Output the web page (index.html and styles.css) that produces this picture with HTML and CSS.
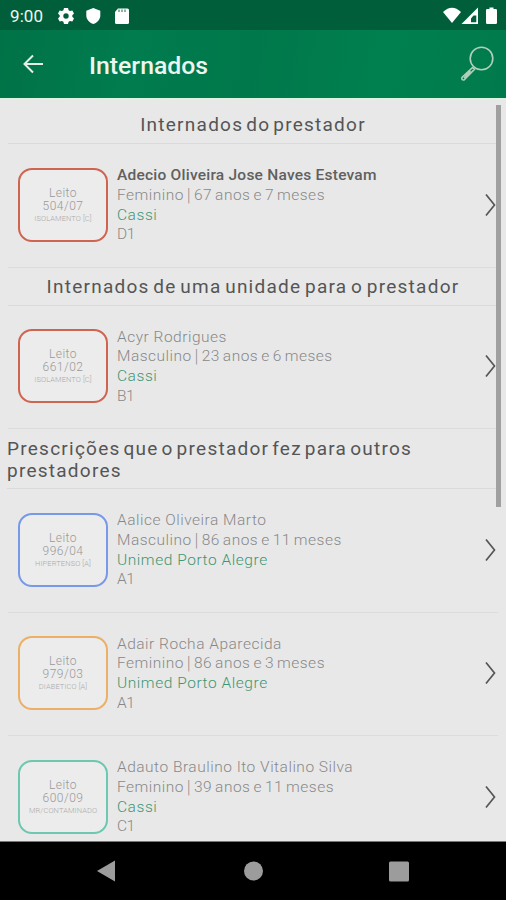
FILE: index.html
```html
<!DOCTYPE html>
<html lang="pt-BR">
<head>
<meta charset="utf-8">
<title>Internados</title>
<link rel="stylesheet" href="styles.css">
</head>
<body>
<div class="screen">
  <div class="status">
    <span class="time">9:00</span>
    <svg class="status-left" viewBox="0 0 74 20" width="74" height="20">
      <path fill-rule="evenodd" d="M7 2h4l.6 2.3 1.4.8 2.3-.7 1.7 3.2-1.7 1.6v1.6l1.7 1.6-1.7 3.2-2.3-.7-1.4.8L11 18H7l-.6-2.3-1.4-.8-2.3.7L1 12.400l1.700-1.600V9.200L1 7.600l1.700-3.200 2.300.7 1.400-.8zM9 7.300a2.700 2.700 0 1 0 0 5.400a2.700 2.700 0 0 0 0-5.400z"/>
      <path d="M36.300 2l7 2.700V9.500c0 4-3 7.200-7 8.500c-4-1.300-7-4.500-7-8.500V4.700z"/>
      <path d="M61 2.500h9.500q1.500 0 1.500 1.500v12.500q0 1.500-1.500 1.500h-11q-1.500 0-1.500-1.500V6z"/>
      <path class="sd-pins" d="M62 3.500v2.500M65 3.500v2.500M68 3.500v2.500"/>
    </svg>
    <svg class="status-right" viewBox="0 0 56 20" width="56" height="20">
      <path d="M1 6Q10-2.500 19 6L10 17z"/>
      <path fill-rule="evenodd" d="M36 1.500V18H19.500zM34.300 9.500h-2.800L29 12.500v3.700h5.300z"/>
      <path d="M47.500 1.500h4V3h2.200q1.300 0 1.300 1.300v12.400q0 1.300-1.300 1.300h-8.400q-1.300 0-1.300-1.300V4.300Q44 3 45.300 3h2.200z"/>
    </svg>
  </div>
  <header class="appbar">
    <svg class="back" viewBox="0 0 22 20" width="22" height="20"><path d="M20 10H2M10 1.500L1.500 10l8.500 8.500"/></svg>
    <h1>Internados</h1>
    <svg class="search" viewBox="0 0 36 36" width="36" height="36"><circle cx="22.500" cy="12.500" r="11.300"/><path d="M13.500 21.500L3 31.500q-.8 2.800 2 2.500L15.500 23.200zM11.500 25L5 32"/></svg>
  </header>
  <main class="list">
    <div class="thumb"></div>
    <h2 class="first">Internados do prestador</h2>
    <section class="row">
      <div class="bed red"><span>Leito</span><span>504/07</span><small>ISOLAMENTO [C]</small></div>
      <div class="info"><p class="strong">Adecio Oliveira Jose Naves Estevam</p><p class="age">Feminino <i>|</i> 67 anos e 7 meses</p><p class="plan">Cassi</p><p class="unit">D1</p></div>
      <svg class="chev" viewBox="0 0 11 24" width="11" height="24"><path d="M1 1.500L9.500 12 1 22.500"/></svg>
    </section>
    <h2 class="second">Internados de uma unidade para o prestador</h2>
    <section class="row">
      <div class="bed red"><span>Leito</span><span>661/02</span><small>ISOLAMENTO [C]</small></div>
      <div class="info"><p>Acyr Rodrigues</p><p class="age">Masculino <i>|</i> 23 anos e 6 meses</p><p class="plan">Cassi</p><p class="unit">B1</p></div>
      <svg class="chev" viewBox="0 0 11 24" width="11" height="24"><path d="M1 1.500L9.500 12 1 22.500"/></svg>
    </section>
    <h2 class="long">Prescrições que o prestador fez para outros<br>prestadores</h2>
    <section class="row">
      <div class="bed blue"><span>Leito</span><span>996/04</span><small>HIPERTENSO [A]</small></div>
      <div class="info"><p>Aalice Oliveira Marto</p><p class="age">Masculino <i>|</i> 86 anos e 11 meses</p><p class="plan">Unimed Porto Alegre</p><p class="unit">A1</p></div>
      <svg class="chev" viewBox="0 0 11 24" width="11" height="24"><path d="M1 1.500L9.500 12 1 22.500"/></svg>
    </section>
    <section class="row">
      <div class="bed orange"><span>Leito</span><span>979/03</span><small>DIABETICO [A]</small></div>
      <div class="info"><p>Adair Rocha Aparecida</p><p class="age">Feminino <i>|</i> 86 anos e 3 meses</p><p class="plan">Unimed Porto Alegre</p><p class="unit">A1</p></div>
      <svg class="chev" viewBox="0 0 11 24" width="11" height="24"><path d="M1 1.500L9.500 12 1 22.500"/></svg>
    </section>
    <section class="row">
      <div class="bed teal"><span>Leito</span><span>600/09</span><small>MR/CONTAMINADO</small></div>
      <div class="info"><p>Adauto Braulino Ito Vitalino Silva</p><p class="age">Feminino <i>|</i> 39 anos e 11 meses</p><p class="plan">Cassi</p><p class="unit">C1</p></div>
      <svg class="chev" viewBox="0 0 11 24" width="11" height="24"><path d="M1 1.500L9.500 12 1 22.500"/></svg>
    </section>
  </main>
  <nav class="navbar">
    <svg viewBox="0 0 506 58" width="506" height="58"><path d="M97 29L115 18.500v21z"/><circle cx="253.500" cy="29" r="9.500"/><rect x="389" y="19.500" width="20" height="20" rx="1.500"/></svg>
  </nav>
</div>
</body>
</html>
```
FILE: styles.css
```css
* { box-sizing: border-box; }
body { margin: 0; font-family: Roboto, "Liberation Sans", sans-serif; }
h1, h2, p { margin: 0; }
.screen { width: 506px; height: 900px; display: flex; flex-direction: column; overflow: hidden; background: #e8e8e8; }
.status { height: 30px; flex: none; display: flex; align-items: center; background: #005f3a; color: #f1f6f3; padding: 1px 8px 0 10px; }
.status svg { fill: #fff; }
.time { font-size: 17px; width: 47px; letter-spacing: .1px; }
.status-right { margin-left: auto; }
.sd-pins { stroke: #4b8a6d; stroke-width: 1.3; }
.appbar { height: 70px; flex: none; display: flex; align-items: center; padding: 0 11px 0 23px; color: #eef5ef; border-bottom: 2px solid #dcf3df; background: linear-gradient(100deg, #007247 0%, #007c4e 25%, #00784b 50%, #00804f 75%, #007a4c 100%); }
.appbar svg { fill: none; stroke: #e6efe7; }
.back { stroke-width: 2; }
.appbar h1 { font-size: 24.800px; font-weight: 500; margin: 3px 0 0 44px; }
.search { margin-left: auto; stroke-width: 1.600; }
.appbar .search { stroke: #b0d0bc; }
.list { position: relative; height: 742px; flex: none; overflow: hidden; border-bottom: 1px solid #777; padding: 0 8px; }
.thumb { position: absolute; left: 496px; top: 5px; width: 5px; height: 402px; background: #a0a0a0; }
h2 { height: 38px; font-size: 19px; line-height: 21.500px; font-weight: 400; color: #555; letter-spacing: 1.250px; word-spacing: -3px; text-align: center; padding-top: 8px; border-bottom: 1px solid #dadada; white-space: nowrap; }
h2.first { height: 44px; padding-top: 14px; }
h2.second { word-spacing: -2.300px; }
h2.long { height: 60px; text-align: left; padding-top: 9px; margin-left: -1px; }
.row { height: 123.500px; display: flex; border-bottom: 1px solid #dcdcdc; padding: 23.500px 0 0 10px; }
.bed { width: 90px; height: 74px; border: 1.500px solid; border-width: 2px; border-radius: 14px; background: #ececec; display: flex; flex-direction: column; align-items: center; padding-top: 17px; font-weight: 300; }
.bed span { font-size: 12px; line-height: 13px; color: #999; letter-spacing: .5px; }
.bed small { font-size: 7.500px; line-height: 12px; color: #aaa; white-space: nowrap; letter-spacing: .1px; }
.red { border-color: #cf6450; }
.blue { border-color: #7898e8; }
.orange { border-color: #ebb066; }
.teal { border-color: #6cc8b0; }
.info { margin-left: 9px; margin-top: -1.500px; flex: 1; }
.info p { font-size: 15.500px; line-height: 19.750px; font-weight: 300; color: #888; letter-spacing: .5px; white-space: nowrap; }
.info .age { word-spacing: -1.300px; }
.info .age i { display: inline-block; font-style: normal; transform: scaleY(1.150); }
.info .strong { font-weight: 500; color: #606060; letter-spacing: .230px; }
.info .plan { color: #3e9672; letter-spacing: .550px; }
.info .unit { letter-spacing: -.500px; }
.chev { margin: 25px 2px 0 0; fill: none; stroke: #555; stroke-width: 1.700; }
.navbar { height: 58px; flex: none; background: #000; fill: #9c9c9c; }
.navbar svg { display: block; }
```
